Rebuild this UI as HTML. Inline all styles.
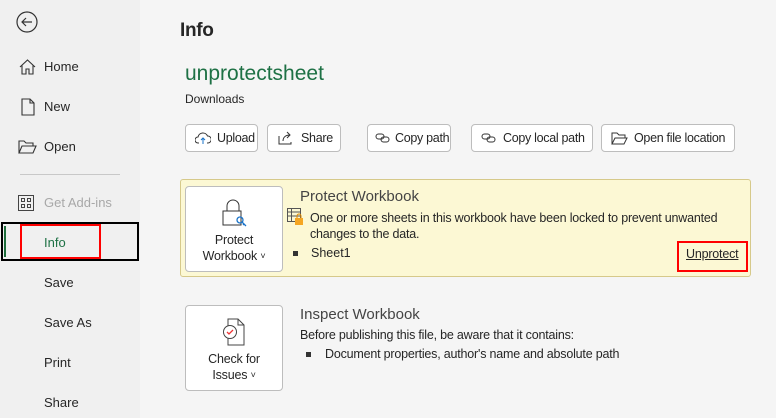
<!DOCTYPE html>
<html><head><meta charset="utf-8"><style>
*{margin:0;padding:0;box-sizing:border-box}
body{width:776px;height:418px;overflow:hidden;background:#f5f5f5;font-family:"Liberation Sans",sans-serif;color:#262626;position:relative}
.side{position:absolute;left:0;top:0;width:140px;height:418px;background:#f0f0f0}
.a{position:absolute;white-space:nowrap}
.n{font-size:13px;left:44px}
.btn{position:absolute;top:124px;height:28px;border:1px solid #bdbdbd;border-radius:4px;background:#fff;font-size:12.5px;letter-spacing:-0.3px;display:flex;align-items:center;padding-left:9px;gap:6px;white-space:nowrap;overflow:hidden}
.big{position:absolute;left:185px;width:98px;height:86px;background:#fff;border:1px solid #bdbdbd;border-radius:4px;font-size:12.5px;text-align:center;line-height:16px;letter-spacing:-0.2px}
.ch{font-size:9px;vertical-align:1px}
svg{display:block;flex:none}
</style></head><body>
<div class="side">
<svg class="a" style="left:16px;top:11px" width="22" height="22"><circle cx="11" cy="11" r="10" fill="none" stroke="#333" stroke-width="1.2"/><path d="M16 11H6M10 7l-4 4 4 4" fill="none" stroke="#333" stroke-width="1.2"/></svg>
<svg class="a" style="left:19px;top:59px" width="17" height="16"><path d="M1 8L8.5 1 16 8M3 6.5V15h4v-5h3v5h4V6.5" fill="none" stroke="#333" stroke-width="1.1"/></svg>
<div class="a n" style="top:59px">Home</div>
<svg class="a" style="left:21px;top:98px" width="14" height="18"><path d="M1 1h8l4 4v12H1z M9 1v4h4" fill="none" stroke="#333" stroke-width="1.1"/></svg>
<div class="a n" style="top:99px">New</div>
<svg class="a" style="left:18px;top:140px" width="19" height="14"><path d="M1 13V1h5l2 2h7v3 M1 13l3-7h14l-3 7z" fill="none" stroke="#333" stroke-width="1.1"/></svg>
<div class="a n" style="top:139px">Open</div>
<div class="a" style="left:20px;top:174px;width:100px;height:1px;background:#c8c8c8"></div>
<svg class="a" style="left:18px;top:195px" width="16" height="16"><rect x=".5" y=".5" width="15" height="15" fill="none" stroke="#444"/><rect x="3.5" y="3.5" width="3" height="3" fill="none" stroke="#444"/><rect x="9.5" y="3.5" width="3" height="3" fill="none" stroke="#444"/><rect x="3.5" y="9.5" width="3" height="3" fill="none" stroke="#444"/><rect x="9.5" y="9.5" width="3" height="3" fill="none" stroke="#444"/></svg>
<div class="a n" style="top:195px;color:#a8a8a8">Get Add-ins</div>
<div class="a" style="left:1px;top:222px;width:138px;height:39px;border:2px solid #000"></div>
<div class="a" style="left:4px;top:226px;width:2px;height:31px;background:#1e6e3c"></div>
<div class="a" style="left:20px;top:224px;width:81px;height:35px;border:2px solid #f00"></div>
<div class="a n" style="top:235px;color:#1e7145">Info</div>
<div class="a n" style="top:275px">Save</div>
<div class="a n" style="top:315px">Save As</div>
<div class="a n" style="top:355px">Print</div>
<div class="a n" style="top:395px">Share</div>
</div>
<div class="a" style="left:180px;top:20px;font-size:19px;color:#262626;font-weight:bold;letter-spacing:-0.3px">Info</div>
<div class="a" style="left:185px;top:62px;font-size:21px;color:#1e7145">unprotectsheet</div>
<div class="a" style="left:185px;top:92px;font-size:12px">Downloads</div>
<div class="btn" style="left:185px;width:73px"><svg width="16" height="14"><path d="M4 12H3a3 3 0 010-6 5 5 0 019.5-1A3 3 0 0113 12h-1" fill="none" stroke="#333"/><path d="M8 13V7M6 9l2-2 2 2" fill="none" stroke="#1a73c8"/></svg>Upload</div>
<div class="btn" style="left:267px;width:74px;padding-left:10px;gap:7px"><svg width="16" height="14"><path d="M1 5v8h12v-2M5 10c0-4 3-6 7-6M9 1l3 3-3 3" fill="none" stroke="#333"/></svg>Share</div>
<div class="btn" style="left:367px;width:84px;padding-left:7px;gap:4px"><svg width="16" height="12"><rect x="1" y="2" width="8" height="5" rx="2.5" fill="none" stroke="#333"/><rect x="6" y="5" width="8" height="5" rx="2.5" fill="none" stroke="#333"/></svg>Copy path</div>
<div class="btn" style="left:471px;width:122px"><svg width="16" height="12"><rect x="1" y="2" width="8" height="5" rx="2.5" fill="none" stroke="#333"/><rect x="6" y="5" width="8" height="5" rx="2.5" fill="none" stroke="#333"/></svg>Copy local path</div>
<div class="btn" style="left:601px;width:134px"><svg width="17" height="13"><path d="M1 12V1h5l2 2h6v3 M1 12l3-6h12l-3 6z" fill="none" stroke="#333"/></svg>Open file location</div>
<div class="a" style="left:180px;top:179px;width:571px;height:98px;background:#fcf8d4;border:1px solid #d6c98a;border-radius:3px"></div>
<div class="big" style="top:186px">
<svg style="margin:12px auto 3px" width="26" height="30"><path d="M6 12V7a6 6 0 0112 0v5" fill="none" stroke="#333"/><rect x="2" y="12" width="18" height="14" fill="#fff" stroke="#333"/><circle cx="19" cy="21" r="3" fill="none" stroke="#1a73c8" stroke-width="1.3"/><path d="M21 23l4 4M23 25l-1 1" stroke="#1a73c8" stroke-width="1.3"/></svg>
Protect<br>Workbook <span class="ch">˅</span></div>
<div class="a" style="left:300px;top:188px;font-size:15px;color:#444">Protect Workbook</div>
<svg class="a" style="left:287px;top:208px" width="17" height="18"><rect x=".5" y=".5" width="13" height="13" fill="none" stroke="#555"/><path d="M.5 4h13M.5 8h13M4.5 .5v13" stroke="#555"/><rect x="8" y="10" width="8" height="7" fill="#f5a623"/><path d="M10 10V8a2 2 0 014 0v2" fill="none" stroke="#e08a00"/></svg>
<div class="a" style="left:310px;top:210px;font-size:12.5px;line-height:16px;white-space:normal;width:440px;letter-spacing:-0.2px">One or more sheets in this workbook have been locked to prevent unwanted changes to the data.</div>
<div class="a" style="left:293px;top:251px;width:5px;height:5px;background:#333"></div>
<div class="a" style="left:311px;top:246px;font-size:12.5px">Sheet1</div>
<div class="a" style="left:677px;top:241px;width:71px;height:31px;border:2px solid #f00"></div>
<div class="a" style="left:686px;top:247px;font-size:12.5px;text-decoration:underline;letter-spacing:-0.2px">Unprotect</div>
<div class="big" style="top:305px">
<svg style="margin:12px auto 3px" width="28" height="30"><path d="M8 1h10l6 6v20H8z" fill="#fff" stroke="#444"/><path d="M18 1v6h6" fill="none" stroke="#444"/><circle cx="10" cy="14" r="6.5" fill="#fff" stroke="#444"/><path d="M7 14l2 2 4-4" fill="none" stroke="#e33" stroke-width="1.3"/></svg>
Check for<br>Issues <span class="ch">˅</span></div>
<div class="a" style="left:300px;top:306px;font-size:15px;color:#444">Inspect Workbook</div>
<div class="a" style="left:300px;top:328px;font-size:12.5px;letter-spacing:-0.2px">Before publishing this file, be aware that it contains:</div>
<div class="a" style="left:306px;top:352px;width:5px;height:5px;background:#333"></div>
<div class="a" style="left:325px;top:347px;font-size:12.5px;letter-spacing:-0.2px">Document properties, author's name and absolute path</div>
</body></html>
